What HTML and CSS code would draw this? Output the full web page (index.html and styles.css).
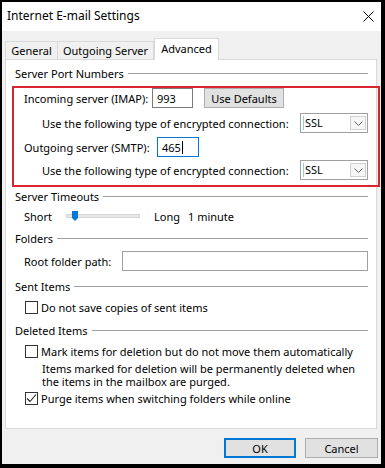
FILE: index.html
```html
<!DOCTYPE html>
<html lang="en">
<head>
  <meta charset="UTF-8" />
  <meta name="viewport" content="width=device-width, initial-scale=1.0" />
  <title>Internet E-mail Settings</title>
  <link rel="stylesheet" href="styles.css">
</head>
<body>
  <div class="window">
    <div class="titlebar">
      <span class="title">Internet E-mail Settings</span>
      <svg class="close" width="11" height="11" viewBox="0 0 11 11">
        <path d="M0.5 0.5 L10.5 10.5 M10.5 0.5 L0.5 10.5" stroke="#000" stroke-width="1" fill="none" />
      </svg>
    </div>

    <div class="content">
      <div class="tabs">
        <div class="tab tab-general">General</div>
        <div class="tab tab-outgoing">Outgoing Server</div>
        <div class="tab tab-advanced active">Advanced</div>
      </div>

      <div class="panel">
        <div class="group-title first"><span>Server Port Numbers</span></div>

        <div class="highlight">
          <div class="row row-imap">
            <span class="label imap-label">Incoming server (IMAP):</span>
            <div class="field port">993</div>
            <div class="btn small">Use Defaults</div>
          </div>
          <div class="row sub row-enc1">
            <span>Use the following type of encrypted connection:</span>
            <div class="select"><span class="sel-text">SSL</span><span class="drop"><svg width="9" height="5" viewBox="0 0 9 5"><path d="M0.5 0.5 L4.5 4.5 L8.5 0.5" stroke="#606060" fill="none" /></svg></span></div>
          </div>
          <div class="row row-smtp">
            <span class="label smtp-label">Outgoing server (SMTP):</span>
            <div class="field port focused">465<span class="caret"></span></div>
          </div>
          <div class="row sub row-enc2">
            <span>Use the following type of encrypted connection:</span>
            <div class="select"><span class="sel-text">SSL</span><span class="drop"><svg width="9" height="5" viewBox="0 0 9 5"><path d="M0.5 0.5 L4.5 4.5 L8.5 0.5" stroke="#606060" fill="none" /></svg></span></div>
          </div>
        </div>

        <div class="group-title gt-timeouts"><span>Server Timeouts</span></div>
        <div class="row slider-row">
          <span class="label short">Short</span>
          <div class="slider">
            <div class="track"></div>
            <svg class="thumb" width="6" height="10" viewBox="0 0 6 10"><path d="M0 0 H6 V7 L3 10 L0 7 Z" fill="#0078d7" /></svg>
          </div>
          <span class="long">Long</span>
          <span class="minute">1 minute</span>
        </div>

        <div class="group-title gt-folders"><span>Folders</span></div>
        <div class="row root-row">
          <span class="label root-label">Root folder path:</span>
          <div class="field root"></div>
        </div>

        <div class="group-title gt-sent"><span>Sent Items</span></div>
        <div class="row check-row sent-row">
          <span class="checkbox"></span>
          <span>Do not save copies of sent items</span>
        </div>

        <div class="group-title gt-deleted"><span>Deleted Items</span></div>
        <div class="row check-row mark-row">
          <span class="checkbox"></span>
          <span>Mark items for deletion but do not move them automatically</span>
        </div>
        <p class="note">Items marked for deletion will be permanently deleted when<br>the items in the mailbox are purged.</p>
        <div class="row check-row purge-row">
          <span class="checkbox checked"><svg width="11" height="11" viewBox="0 0 11 11"><path d="M1 5.5 L4 8.5 L10 1.5" stroke="#222" stroke-width="1.1" fill="none" /></svg></span>
          <span>Purge items when switching folders while online</span>
        </div>
      </div>

      <div class="actions">
        <div class="btn primary">OK</div>
        <div class="btn">Cancel</div>
      </div>
    </div>
  </div>
</body>
</html>
```

FILE: styles.css
```css
body {
  margin: 0;
  background: #000;
  font-family: "Noto Sans", "Open Sans", sans-serif;
  font-size: 11px;
  color: #000;
}
.window {
  margin: 2px 4px 4px 2px;
  width: 379px;
  height: 462px;
  background: #f0f0f0;
  display: flex;
  flex-direction: column;
}
.titlebar {
  height: 29px;
  background: #fff;
  display: flex;
  align-items: center;
  justify-content: space-between;
  padding: 0 7px 0 5px;
}
.title {
  font-size: 12px;
  margin-top: -2px;
}
.close {
  margin-top: -1px;
}
.content {
  flex: 1;
  display: flex;
  flex-direction: column;
  padding: 0 3px 0 3px;
}
.tabs {
  height: 28px;
  display: flex;
  align-items: flex-end;
}
.tab {
  height: 18px;
  border: 1px solid #d9d9d9;
  border-bottom: none;
  box-sizing: border-box;
  display: flex;
  align-items: center;
  justify-content: center;
  background: #f0f0f0;
}
.tab-general {
  width: 53px;
}
.tab-outgoing {
  width: 96px;
  border-left: none;
}
.tab-advanced {
  width: 65px;
}
.tab.active {
  height: 22px;
  background: #fff;
  margin-bottom: -1px;
  position: relative;
  z-index: 1;
  align-items: flex-start;
  padding-top: 2px;
  border-left: 1px solid #d9d9d9;
}
.panel {
  height: 370px;
  box-sizing: border-box;
  background: #fff;
  border: 1px solid #d9d9d9;
  width: 372px;
  padding: 0 8px 0 9px;
  display: flex;
  flex-direction: column;
}
.group-title {
  height: 14px;
  display: flex;
  align-items: center;
}
.group-title::after {
  content: "";
  flex: 1;
  height: 1px;
  background: #a0a0a0;
  margin-left: 4px;
}
.group-title.first {
  margin-top: 6px;
}
.highlight {
  margin: 6px -12px 0 -3px;
  border: 2px solid #dc2430;
  padding: 0 10px 5px 10px;
}
.row {
  display: flex;
  align-items: center;
}
.row-imap {
  height: 20px;
}
.row-enc1 {
  height: 20px;
  margin-top: 5px;
}
.row-smtp {
  height: 20px;
  margin-top: 4px;
}
.row-enc2 {
  height: 20px;
  margin-top: 3px;
}
.sub {
  padding-left: 18px;
  justify-content: space-between;
}
.imap-label {
  width: 128px;
}
.smtp-label {
  width: 133px;
}
.field {
  box-sizing: border-box;
  border: 1px solid #7a7a7a;
  background: #fff;
  height: 20px;
  display: flex;
  align-items: center;
  padding-left: 4px;
}
.field.port {
  width: 41px;
}
.field.focused {
  width: 42px;
  border-color: #0078d7;
}
.caret {
  width: 1px;
  height: 13px;
  background: #000;
  margin-left: 1px;
}
.btn {
  box-sizing: border-box;
  background: #e1e1e1;
  border: 1px solid #adadad;
  display: flex;
  align-items: center;
  justify-content: center;
  height: 20px;
}
.btn.small {
  width: 80px;
  margin-left: 11px;
}
.select {
  box-sizing: border-box;
  width: 68px;
  height: 20px;
  border: 1px solid #a0a0a0;
  display: flex;
  align-items: center;
  justify-content: space-between;
  padding: 0 1px 0 2px;
}
.sel-text {
  border-left: 1px solid #9cc6ea;
  padding-left: 1px;
  height: 14px;
  line-height: 14px;
}
.drop {
  width: 16px;
  height: 14px;
  box-sizing: border-box;
  border: 1px solid #d0d0d0;
  background: #f6f6f6;
  display: flex;
  align-items: center;
  justify-content: center;
}
.gt-timeouts {
  margin-top: 2px;
}
.slider-row {
  height: 14px;
  margin-top: 6px;
  padding-left: 9px;
}
.short {
  width: 42px;
}
.slider {
  width: 74px;
  height: 10px;
  display: flex;
  align-items: center;
  position: relative;
}
.track {
  width: 74px;
  height: 4px;
  box-sizing: border-box;
  background: #e7e7e7;
  border: 1px solid #d6d6d6;
}
.thumb {
  position: absolute;
  left: 6px;
  top: 0;
}
.long {
  margin-left: 14px;
}
.minute {
  margin-left: 8px;
}
.gt-folders {
  margin-top: 8px;
}
.root-row {
  margin-top: 6px;
  height: 20px;
  padding-left: 9px;
}
.root-label {
  width: 98px;
}
.field.root {
  flex: 1;
  border-color: #a0a0a0;
  height: 20px;
}
.gt-sent {
  margin-top: 8px;
}
.check-row {
  height: 14px;
  padding-left: 10px;
}
.sent-row {
  margin-top: 7px;
}
.checkbox {
  width: 13px;
  height: 13px;
  box-sizing: border-box;
  border: 1px solid #333;
  background: #fff;
  margin-right: 3px;
  display: flex;
  align-items: center;
  justify-content: center;
}
.gt-deleted {
  margin-top: 9px;
}
.mark-row {
  margin-top: 7px;
}
.note {
  margin: 4px 0 0 27px;
  line-height: 13px;
}
.purge-row {
  margin-top: 3px;
}
.actions {
  display: flex;
  justify-content: flex-end;
  gap: 9px;
  margin-top: 9px;
}
.actions .btn {
  width: 73px;
}
.actions .btn.primary {
  width: 72px;
  border: 2px solid #0078d7;
}
```
